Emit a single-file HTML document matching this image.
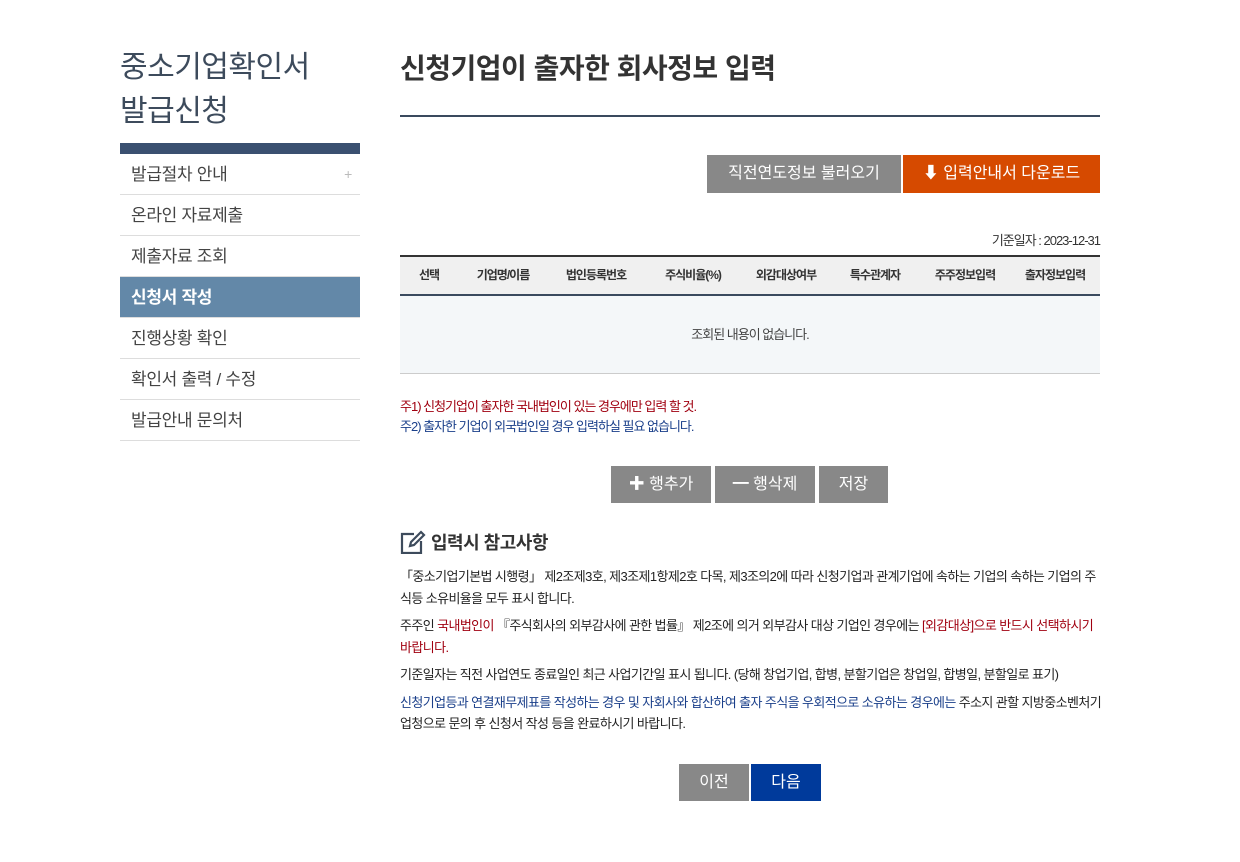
<!DOCTYPE html>
<html><head><meta charset="utf-8"><style>
*{margin:0;padding:0;box-sizing:border-box}
body{width:1240px;height:862px;background:#fff;font-family:"Liberation Sans","Noto Sans CJK KR",sans-serif;color:#333;position:relative;overflow:hidden}
.abs{position:absolute}
.side-title{left:120px;top:46px;font-size:30px;line-height:44px;color:#3d4b5c;letter-spacing:-0.5px}
.bar{left:120px;top:143px;width:240px;height:11px;background:#3a5070}
.menu{left:120px;top:154px;width:240px}
.menu div{height:41px;line-height:41px;border-bottom:1px solid #ddd;padding-left:11px;font-size:17px;color:#444;position:relative;letter-spacing:-0.3px}
.menu div.act{background:#6388a8;color:#fff;font-weight:bold}
.btn{position:absolute;color:#fff;text-align:center;font-size:16px;background:#888}
.cond{letter-spacing:-1px}
</style></head><body>
<div class="abs side-title">중소기업확인서<br>발급신청</div>
<div class="abs bar"></div>
<div class="abs menu">
<div>발급절차 안내<span style="position:absolute;right:8px;color:#bbb;font-size:14px">+</span></div>
<div>온라인 자료제출</div>
<div>제출자료 조회</div>
<div class="act">신청서 작성</div>
<div>진행상황 확인</div>
<div>확인서 출력 / 수정</div>
<div>발급안내 문의처</div>
</div>

<div class="abs" style="left:400px;top:47px;font-size:28px;font-weight:bold;color:#333;letter-spacing:-0.5px">신청기업이 출자한 회사정보 입력</div>
<div class="abs" style="left:400px;top:115px;width:700px;height:2px;background:#3a4a5e"></div>

<div class="btn" style="left:707px;top:155px;width:194px;height:38px;line-height:38px">직전연도정보 불러오기</div>
<div class="btn" style="left:903px;top:155px;width:197px;height:38px;line-height:38px;background:#d64a00">⬇ 입력안내서 다운로드</div>

<div class="abs cond" style="right:140px;top:230px;font-size:13px;color:#333">기준일자 : 2023-12-31</div>
<div class="abs" style="left:400px;top:255px;width:700px;height:2px;background:#333"></div>
<div class="abs" style="left:400px;top:257px;width:700px;height:37px;background:#f0f0f0;display:flex;font-size:12px;font-weight:bold;color:#333;line-height:37px;text-align:center" >
<div style="width:58px" class="cond">선택</div><div style="width:90px" class="cond">기업명/이름</div><div style="width:96px" class="cond">법인등록번호</div><div style="width:98px" class="cond">주식비율(%)</div><div style="width:88px" class="cond">외감대상여부</div><div style="width:90px" class="cond">특수관계자</div><div style="width:90px" class="cond">주주정보입력</div><div style="width:90px" class="cond">출자정보입력</div></div>
<div class="abs" style="left:400px;top:294px;width:700px;height:2px;background:#3a4a5e"></div>
<div class="abs cond" style="left:400px;top:296px;width:700px;height:78px;background:#f4f7f9;border-bottom:1px solid #ccc;text-align:center;line-height:78px;font-size:13px;color:#444">조회된 내용이 없습니다.</div>

<div class="abs cond" style="left:400px;top:397px;font-size:13px;line-height:20px">
<div style="color:#a00010">주1) 신청기업이 출자한 국내법인이 있는 경우에만 입력 할 것.</div>
<div style="color:#1a3f8a">주2) 출자한 기업이 외국법인일 경우 입력하실 필요 없습니다.</div></div>

<div class="btn" style="left:611px;top:466px;width:100px;height:37px;line-height:37px">✚ 행추가</div>
<div class="btn" style="left:715px;top:466px;width:100px;height:37px;line-height:37px">━ 행삭제</div>
<div class="btn" style="left:819px;top:466px;width:69px;height:37px;line-height:37px">저장</div>

<svg class="abs" style="left:400px;top:530px" width="26" height="24" viewBox="0 0 26 24" fill="none" stroke="#3d4b5c" stroke-width="2.2"><path d="M14 4H2v19h19V11"/><path d="M10 16l1-4 10-10 3 3-10 10z"/></svg>
<div class="abs" style="left:431px;top:529px;font-size:18px;font-weight:bold;color:#333;letter-spacing:-0.5px">입력시 참고사항</div>

<div class="abs" style="left:400px;top:566px;width:702px;font-size:13px;line-height:21.5px;color:#222;letter-spacing:-0.6px">
<p style="margin-bottom:6px">「중소기업기본법 시행령」 제2조제3호, 제3조제1항제2호 다목, 제3조의2에 따라 신청기업과 관계기업에 속하는 기업의 속하는 기업의 주식등 소유비율을 모두 표시 합니다.</p>
<p style="margin-bottom:6px">주주인 <span style="color:#a00010">국내법인이</span> 『주식회사의 외부감사에 관한 법률』 제2조에 의거 외부감사 대상 기업인 경우에는 <span style="color:#a00010">[외감대상]으로 반드시 선택하시기 바랍니다.</span></p>
<p style="margin-bottom:6px">기준일자는 직전 사업연도 종료일인 최근 사업기간일 표시 됩니다. (당해 창업기업, 합병, 분할기업은 창업일, 합병일, 분할일로 표기)</p>
<p><span style="color:#1a3f8a">신청기업등과 연결재무제표를 작성하는 경우 및 자회사와 합산하여 출자 주식을 우회적으로 소유하는 경우에는</span> 주소지 관할 지방중소벤처기업청으로 문의 후 신청서 작성 등을 완료하시기 바랍니다.</p>
</div>

<div class="btn" style="left:679px;top:764px;width:70px;height:37px;line-height:37px">이전</div>
<div class="btn" style="left:751px;top:764px;width:70px;height:37px;line-height:37px;background:#003a9b">다음</div>
</body></html>
